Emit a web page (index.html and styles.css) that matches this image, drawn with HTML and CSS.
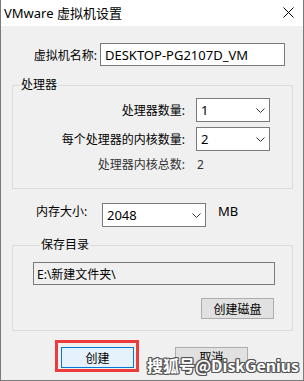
FILE: index.html
```html
<!DOCTYPE html>
<html lang="zh-CN">

<head>
    <meta charset="UTF-8">
    <meta name="viewport" content="width=device-width, initial-scale=1.0">
    <title>VMware 虚拟机设置</title>
    <link rel="stylesheet" href="styles.css">
</head>

<body>
    <div class="window">
        <div class="titlebar">
            <span class="title">VMware 虚拟机设置</span>
            <svg class="close" width="11" height="11" viewBox="0 0 11 11">
                <path d="M0.5 0.5 L10.5 10.5 M10.5 0.5 L0.5 10.5" stroke="#000" stroke-width="1" fill="none" />
            </svg>
        </div>

        <div class="content">
            <div class="name-row">
                <span class="name-label">虚拟机名称:</span>
                <div class="textbox name-box">DESKTOP-PG2107D_VM</div>
            </div>

            <fieldset class="group cpu-group">
                <legend>处理器</legend>
                <div class="cpu-grid">
                    <span class="cpu-label">处理器数量:</span>
                    <div class="combo cpu-combo">
                        <span>1</span>
                        <svg width="9" height="5" viewBox="0 0 9 5"><path d="M0.5 0.5 L4.5 4.5 L8.5 0.5" stroke="#333" fill="none" /></svg>
                    </div>

                    <span class="cpu-label">每个处理器的内核数量:</span>
                    <div class="combo cpu-combo">
                        <span>2</span>
                        <svg width="9" height="5" viewBox="0 0 9 5"><path d="M0.5 0.5 L4.5 4.5 L8.5 0.5" stroke="#333" fill="none" /></svg>
                    </div>

                    <span class="cpu-label total">处理器内核总数:</span>
                    <span class="total-value">2</span>
                </div>
            </fieldset>

            <div class="mem-row">
                <span class="mem-label">内存大小:</span>
                <div class="combo mem-combo">
                    <span>2048</span>
                    <svg width="9" height="5" viewBox="0 0 9 5"><path d="M0.5 0.5 L4.5 4.5 L8.5 0.5" stroke="#333" fill="none" /></svg>
                </div>
                <span class="mem-unit">MB</span>
            </div>

            <fieldset class="group dir-group">
                <legend>保存目录</legend>
                <div class="textbox dir-box">E:\新建文件夹\</div>
                <div class="dir-actions">
                    <button class="btn">创建磁盘</button>
                </div>
            </fieldset>

            <div class="actions">
                <div class="highlight">
                    <button class="btn btn-default">创建</button>
                </div>
                <button class="btn cancel">取消</button>
            </div>
        </div>

        <div class="watermark">搜狐号@DiskGenius</div>
    </div>
</body>

</html>
```

FILE: styles.css
```css
body {
    margin: 0;
    font-family: "Noto Sans", "Noto Sans CJK SC", sans-serif;
    font-size: 12px;
    color: #000;
    background-color: #f0f0f0;
}

.window {
    position: relative;
    width: 304px;
    height: 381px;
    box-sizing: border-box;
    border: 1px solid #7a7a7a;
    border-top: none;
    background-color: #f0f0f0;
    overflow: hidden;
}

.titlebar {
    height: 26px;
    background-color: #fff;
    display: flex;
    align-items: center;
    justify-content: space-between;
    padding: 0 9px 0 3px;
}

.title {
    font-size: 13px;
    line-height: 16px;
}

.close {
    display: block;
    margin-top: -1px;
}

.content {
    padding: 17px 0 0 11px;
}

/* name */
.name-row {
    display: flex;
    align-items: center;
}

.name-label {
    width: 85px;
    text-align: right;
    margin-right: 3px;
}

.textbox {
    box-sizing: border-box;
    border: 1px solid #7a7a7a;
    background-color: #fff;
    padding: 0 4px;
    display: flex;
    align-items: center;
}

.name-box {
    width: 185px;
    height: 23px;
    font-size: 13px;
}

/* group boxes */
.group {
    box-sizing: border-box;
    width: 281px;
    margin: 0;
    border: 1px solid #dcdcdc;
}

.group legend {
    margin-left: 7px;
    padding: 0 1px;
    line-height: 16px;
}

.cpu-group {
    margin-top: 11px;
    padding: 5px 0 14px 0;
}

.cpu-grid {
    display: grid;
    grid-template-columns: 172px 74px;
    column-gap: 11px;
    row-gap: 5px;
    align-items: center;
}

.cpu-label {
    text-align: right;
}

.cpu-label.total,
.total-value {
    line-height: 18px;
    color: #333;
}

.total-value {
    padding-left: 1px;
}

.combo {
    box-sizing: border-box;
    height: 24px;
    border: 1px solid #7a7a7a;
    background-color: #fff;
    display: flex;
    align-items: center;
    justify-content: space-between;
    padding: 0 4px 0 4px;
    font-size: 13px;
}

.combo svg {
    display: block;
}

/* memory */
.mem-row {
    display: flex;
    align-items: flex-start;
    margin-top: 14px;
    padding-left: 24px;
}

.mem-label {
    width: 66px;
    line-height: 16px;
    margin-top: 1px;
}

.mem-combo {
    width: 104px;
}

.mem-unit {
    margin-left: 12px;
    font-size: 13px;
    line-height: 16px;
}

/* save directory */
.dir-group {
    margin-top: 10px;
    padding: 9px 0 11px 20px;
}

.dir-box {
    width: 242px;
    height: 23px;
    background-color: #f0f0f0;
    padding-left: 3px;
}

.dir-actions {
    width: 241px;
    display: flex;
    justify-content: flex-end;
    margin-top: 13px;
}

/* buttons */
.btn {
    box-sizing: border-box;
    width: 73px;
    height: 21px;
    padding: 0;
    font-family: inherit;
    font-size: 12px;
    color: #000;
    background-color: #e1e1e1;
    border: 1px solid #adadad;
}

.btn-default {
    background-color: #e5f1fb;
    border-color: #0078d7;
}

.actions {
    display: flex;
    align-items: flex-start;
    margin-top: 9px;
    padding-left: 43px;
}

.highlight {
    border: 3px solid #ec3b3b;
    padding: 4px 2px 1px 3px;
}

.cancel {
    margin-left: 36px;
    margin-top: 7px;
    padding-bottom: 4px;
}

.watermark {
    position: absolute;
    left: 146px;
    top: 354px;
    white-space: nowrap;
    font-family: "Noto Sans CJK SC", sans-serif;
    font-size: 16px;
    font-weight: 700;
    color: #fff;
    line-height: 22px;
    text-shadow: 1px 0 0 #555, -1px 0 0 #555, 0 1px 0 #555, 0 -1px 0 #555,
        1px 1px 0 #555, -1px -1px 0 #555, 1px -1px 0 #555, -1px 1px 0 #555;
}
```
